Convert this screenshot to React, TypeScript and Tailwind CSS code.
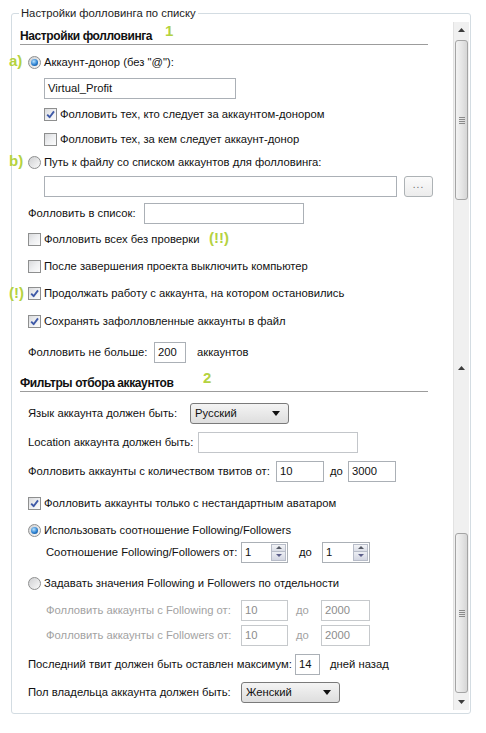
import type { ReactNode } from "react";

const green = "text-[#b4d241]";

function CheckBox({ checked }: { checked?: boolean }) {
  return (
    <span className="inline-flex h-[13px] w-[13px] shrink-0 items-center justify-center border border-[#8e8f8f] bg-gradient-to-br from-[#d9dadc] via-[#eeeff1] to-[#fcfcfc]">
      {checked && (
        <svg viewBox="0 0 11 11" className="h-[11px] w-[11px]">
          <path d="M2.2 5.6 L4.6 8.2 L9 2.4" stroke="#3f5aa8" strokeWidth="1.9" fill="none" strokeLinejoin="round" />
        </svg>
      )}
    </span>
  );
}

function Radio({ checked }: { checked?: boolean }) {
  return (
    <span className="inline-flex h-[13px] w-[13px] shrink-0 items-center justify-center rounded-full border border-[#8e8f8f] bg-gradient-to-br from-[#cfd0d2] to-[#fafafa]">
      {checked && (
        <span className="h-[7px] w-[7px] rounded-full bg-[radial-gradient(circle_at_40%_35%,#b8e4ff,#2a7fd0_55%,#0b3f7a)]" />
      )}
    </span>
  );
}

function TextBox({ className, value, disabled }: { className: string; value?: string; disabled?: boolean }) {
  return (
    <span
      className={
        "flex h-[21px] shrink-0 items-center border bg-white pl-[3px] " +
        (disabled ? "border-[#c6c9cc] text-[#8d8d8d] " : "border-[#abb0b6] text-[#111] ") +
        className
      }
    >
      {value}
    </span>
  );
}

function Select({ className, value }: { className: string; value: string }) {
  return (
    <span
      className={
        "flex h-[21px] shrink-0 items-center justify-between rounded-[3px] border border-[#7a7a7a] bg-gradient-to-b from-[#f4f4f4] to-[#dedede] pl-[4px] pr-[8px] text-[#111] " +
        className
      }
    >
      {value}
      <svg viewBox="0 0 8 5" className="h-[5px] w-[8px]">
        <path d="M0 0 H8 L4 5 Z" fill="#111" />
      </svg>
    </span>
  );
}

function Spinner({ className, value }: { className: string; value: string }) {
  return (
    <span className={"flex h-[21px] shrink-0 items-center justify-between border border-[#abb0b6] bg-white pl-[3px] pr-[1px] text-[#111] " + className}>
      {value}
      <span className="flex h-[17px] w-[15px] flex-col">
        <span className="flex h-1/2 items-center justify-center border border-[#b7bcc8] bg-gradient-to-b from-[#f3f4f7] to-[#dadde6]">
          <svg viewBox="0 0 6 3" className="h-[3px] w-[6px]">
            <path d="M0 3 H6 L3 0 Z" fill="#565a66" />
          </svg>
        </span>
        <span className="flex h-1/2 items-center justify-center border border-t-0 border-[#b7bcc8] bg-gradient-to-b from-[#eceef3] to-[#d3d6e2]">
          <svg viewBox="0 0 6 3" className="h-[3px] w-[6px]">
            <path d="M0 0 H6 L3 3 Z" fill="#5c5f8a" />
          </svg>
        </span>
      </span>
    </span>
  );
}

function Row({ className, children }: { className: string; children: ReactNode }) {
  return <div className={"relative flex h-[22px] items-center " + className}>{children}</div>;
}

function Label({ className, children }: { className?: string; children: ReactNode }) {
  return <span className={"shrink-0 whitespace-nowrap " + (className ?? "")}>{children}</span>;
}

function Header({ className, title, num, numClass }: { className: string; title: string; num: string; numClass: string }) {
  return (
    <div className={"relative ml-[8px] mr-[25px] h-[17px] border-b border-[#9c9c9c] text-[12px] font-bold leading-[16px] tracking-[-0.4px] text-[#111] " + className}>
      {title}
      <span className={"absolute top-[-5px] text-[15px] font-bold tracking-normal " + green + " " + numClass}>{num}</span>
    </div>
  );
}

function Arrow({ up }: { up?: boolean }) {
  return (
    <div className="flex h-[16px] items-center justify-center">
      <svg viewBox="0 0 7 4" className="h-[4px] w-[7px]">
        <path d={up ? "M0 4 H7 L3.5 0 Z" : "M0 0 H7 L3.5 4 Z"} fill="#3c3c3c" />
      </svg>
    </div>
  );
}

function Thumb({ className }: { className: string }) {
  return (
    <div className={"mx-[1px] flex items-center justify-center rounded-[3px] border border-[#a4a4a4] bg-gradient-to-r from-[#f3f3f3] via-[#e6e6e6] to-[#d6d6d6] " + className}>
      <div className="flex w-[6px] flex-col gap-[1px]">
        <span className="h-px bg-[#8a8a8a]" />
        <span className="h-px bg-[#8a8a8a]" />
        <span className="h-px bg-[#8a8a8a]" />
        <span className="h-px bg-[#8a8a8a]" />
      </div>
    </div>
  );
}

export default function App() {
  return (
    <div className="h-[733px] w-[486px] bg-white pt-[13px] font-['Liberation_Sans',Arial,sans-serif] text-[11.25px] text-[#111]">
      <div className="relative ml-[11px] flex h-[701px] w-[460px] rounded-[3px] border border-[#d3dce2]">
        <span className="absolute left-[7px] top-[-8px] bg-white px-[2px] leading-[14px] text-[#222]">
          Настройки фолловинга по списку
        </span>

        <div className="flex w-[441px] flex-col">
          <Header className="mt-[14px]" title="Настройки фолловинга" num="1" numClass="left-[145px]" />

          <Row className="mt-[6px] pl-[16px]">
            <span className={"absolute left-[-3px] top-[1px] text-[15px] font-bold leading-[18px] " + green}>a)</span>
            <Radio checked />
            <Label className="ml-[3px]">Аккаунт-донор (без "@"):</Label>
          </Row>
          <Row className="mt-[4px] pl-[32px]">
            <TextBox className="w-[192px]" value="Virtual_Profit" />
          </Row>
          <Row className="mt-[4px] pl-[32px]">
            <CheckBox checked />
            <Label className="ml-[3px]">Фолловить тех, кто следует за аккаунтом-донором</Label>
          </Row>
          <Row className="mt-[3px] pl-[32px]">
            <CheckBox />
            <Label className="ml-[3px]">Фолловить тех, за кем следует аккаунт-донор</Label>
          </Row>
          <Row className="mt-[1px] pl-[16px]">
            <span className={"absolute left-[-3px] top-[1px] text-[15px] font-bold leading-[18px] " + green}>b)</span>
            <Radio />
            <Label className="ml-[3px]">Путь к файлу со списком аккаунтов для фолловинга:</Label>
          </Row>
          <Row className="mt-[2px] pl-[32px]">
            <TextBox className="w-[353px]" />
            <span className="ml-[7px] flex h-[21px] w-[29px] items-center justify-center rounded-[3px] border border-[#adb2b5] bg-gradient-to-b from-[#fbfbfb] to-[#ececec] pb-[3px] text-[10px] tracking-[1px] text-[#666]">
              ...
            </span>
          </Row>
          <Row className="mt-[5px] pl-[16px]">
            <Label className="w-[116px]">Фолловить в список:</Label>
            <TextBox className="w-[160px] border-[#a7b7c7]" />
          </Row>
          <Row className="mt-[4px] pl-[16px]">
            <CheckBox />
            <Label className="ml-[3px]">Фолловить всех без проверки</Label>
            <span className={"absolute left-[197px] top-[0px] text-[15px] font-bold leading-[20px] " + green}>(!!)</span>
          </Row>
          <Row className="mt-[5px] pl-[16px]">
            <CheckBox />
            <Label className="ml-[3px]">После завершения проекта выключить компьютер</Label>
          </Row>
          <Row className="mt-[5px] pl-[16px]">
            <span className={"absolute left-[-3px] top-[1px] text-[15px] font-bold leading-[20px] " + green}>(!)</span>
            <CheckBox checked />
            <Label className="ml-[3px]">Продолжать работу с аккаунта, на котором остановились</Label>
          </Row>
          <Row className="mt-[6px] pl-[16px]">
            <CheckBox checked />
            <Label className="ml-[3px]">Сохранять зафолловленные аккаунты в файл</Label>
          </Row>
          <Row className="mt-[9px] pl-[16px]">
            <Label className="w-[126px]">Фолловить не больше:</Label>
            <TextBox className="w-[32px]" value="200" />
            <Label className="ml-[11px]">аккаунтов</Label>
          </Row>

          <Header className="mt-[12px]" title="Фильтры отбора аккаунтов" num="2" numClass="left-[183px]" />

          <Row className="mt-[10px] pl-[16px]">
            <Label className="w-[162px]">Язык аккаунта должен быть:</Label>
            <Select className="w-[99px]" value="Русский" />
          </Row>
          <Row className="mt-[7px] pl-[16px]">
            <Label className="w-[170px]">Location аккаунта должен быть:</Label>
            <TextBox className="w-[160px] border-[#c3c6ca]" />
          </Row>
          <Row className="mt-[7px] pl-[16px]">
            <Label className="w-[248px]">Фолловить аккаунты с количеством твитов от:</Label>
            <TextBox className="w-[48px]" value="10" />
            <Label className="ml-[6px] w-[18px]">до</Label>
            <TextBox className="w-[48px]" value="3000" />
          </Row>
          <Row className="mt-[10px] pl-[16px]">
            <CheckBox checked />
            <Label className="ml-[3px]">Фолловить аккаунты только с нестандартным аватаром</Label>
          </Row>
          <Row className="mt-[5px] pl-[16px]">
            <Radio checked />
            <Label className="ml-[3px]">Использовать соотношение Following/Followers</Label>
          </Row>
          <Row className="mt-[0px] pl-[34px]">
            <Label className="w-[195px]">Соотношение Following/Followers от:</Label>
            <Spinner className="w-[47px]" value="1" />
            <Label className="ml-[11px] w-[23px]">до</Label>
            <Spinner className="w-[48px]" value="1" />
          </Row>
          <Row className="mt-[9px] pl-[16px]">
            <Radio />
            <Label className="ml-[3px]">Задавать значения Following и Followers по отдельности</Label>
          </Row>
          <Row className="mt-[5px] pl-[34px] text-[#a2a2a2]">
            <Label className="w-[195px]">Фолловить аккаунты с Following от:</Label>
            <TextBox className="w-[47px]" value="10" disabled />
            <Label className="ml-[8px] w-[25px]">до</Label>
            <TextBox className="w-[49px]" value="2000" disabled />
          </Row>
          <Row className="mt-[3px] pl-[34px] text-[#a2a2a2]">
            <Label className="w-[195px]">Фолловить аккаунты с Followers от:</Label>
            <TextBox className="w-[47px]" value="10" disabled />
            <Label className="ml-[8px] w-[25px]">до</Label>
            <TextBox className="w-[49px]" value="2000" disabled />
          </Row>
          <Row className="mt-[7px] pl-[16px]">
            <Label className="w-[267px]">Последний твит должен быть оставлен максимум:</Label>
            <TextBox className="w-[25px]" value="14" />
            <Label className="ml-[10px]">дней назад</Label>
          </Row>
          <Row className="mt-[6px] pl-[16px]">
            <Label className="w-[213px]">Пол владельца аккаунта должен быть:</Label>
            <Select className="w-[99px]" value="Женский" />
          </Row>
        </div>

        <div className="mt-[8px] mb-[3px] flex w-[16px] flex-col border-l border-[#e2e2e2] bg-[#f0f0f0]">
          <Arrow up />
          <Thumb className="mt-[2px] h-[160px]" />
          <div className="h-[160px]" />
          <Arrow up />
          <div className="h-[157px]" />
          <Thumb className="h-[160px]" />
          <div className="flex-1" />
          <Arrow />
        </div>
      </div>
    </div>
  );
}
